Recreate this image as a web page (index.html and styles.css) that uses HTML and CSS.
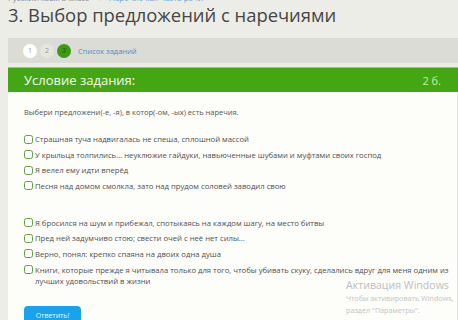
FILE: index.html
```html
<!DOCTYPE html>
<html lang="ru">

<head>
    <meta charset="UTF-8">
    <meta name="viewport" content="width=device-width, initial-scale=1.0">
    <link rel="stylesheet" href="styles.css">
</head>

<body>
    <div class="Page">
        <div class="Crumbs">
            <span>Русский язык 8 класс</span>
            <span class="Sep">→</span>
            <a href="#">Наречие как часть речи</a>
        </div>

        <h1 class="Title">3. Выбор предложений с наречиями</h1>

        <div class="Steps">
            <span class="Step Done">1</span>
            <span class="Step">2</span>
            <span class="Step Current">3</span>
            <a href="#" class="StepsLink">Список заданий</a>
        </div>

        <div class="Task">
            <div class="TaskHead">
                <span>Условие задания:</span>
                <span class="Points">2 б.</span>
            </div>
            <div class="TaskBody">
                <p class="Question">Выбери предложени(-е, -я), в котор(-ом, -ых) есть наречия.</p>

                <div class="Options">
                    <label class="Option"><span class="Box"></span><span>Страшная туча надвигалась не спеша, сплошной массой</span></label>
                    <label class="Option"><span class="Box"></span><span>У крыльца толпились... неуклюжие гайдуки, навьюченные шубами и муфтами своих господ</span></label>
                    <label class="Option"><span class="Box"></span><span>Я велел ему идти вперёд</span></label>
                    <label class="Option"><span class="Box"></span><span>Песня над домом смолкла, зато над прудом соловей заводил свою</span></label>
                </div>

                <div class="Options">
                    <label class="Option"><span class="Box"></span><span>Я бросился на шум и прибежал, спотыкаясь на каждом шагу, на место битвы</span></label>
                    <label class="Option"><span class="Box"></span><span>Пред ней задумчиво стою; свести очей с неё нет силы...</span></label>
                    <label class="Option"><span class="Box"></span><span>Верно, понял: крепко спаяна на двоих одна душа</span></label>
                    <label class="Option"><span class="Box"></span><span>Книги, которые прежде я читывала только для того, чтобы убивать скуку, сделались вдруг для меня одним из лучших удовольствий в жизни</span></label>
                </div>

                <button class="Answer">Ответить!</button>
            </div>
        </div>
    </div>

    <div class="Activation">
        <div class="ActivationTitle">Активация Windows</div>
        <div>Чтобы активировать Windows,</div>
        <div>раздел "Параметры".</div>
    </div>
</body>

</html>
```

FILE: styles.css
```css
body {
    margin: 0;
    font-family: 'Open Sans', sans-serif;
    background-color: #ededE7;
    color: #4d4d4d;
    overflow: hidden;
}

.Page {
    padding-left: 8px;
}

.Crumbs {
    height: 3px;
    overflow: hidden;
    display: flex;
    align-items: flex-end;
    gap: 6px;
    font-size: 8px;
    line-height: 10px;
    color: #888888;
}

.Crumbs a {
    color: #6aa6d6;
    text-decoration: none;
}

.Title {
    margin: 0;
    font-size: 18.4px;
    font-weight: normal;
    line-height: 24px;
    color: #454545;
}

.Steps {
    margin-top: 11px;
    height: 25px;
    background: #dcdcd6;
    display: flex;
    align-items: center;
    gap: 3px;
    padding-left: 15px;
}

.Step {
    width: 14px;
    height: 14px;
    border-radius: 50%;
    display: flex;
    justify-content: center;
    align-items: center;
    font-size: 7px;
    color: #9a9a9a;
    background: #e6e6e0;
}

.Step.Done {
    background: #ffffff;
}

.Step.Current {
    background: #3d9a12;
    color: #1f5a05;
}

.StepsLink {
    margin-left: 4px;
    font-size: 7.5px;
    color: #4a8fcc;
    text-decoration: none;
}

.Task {
    margin-top: 4px;
}

.TaskHead {
    height: 24px;
    border-top: 1px solid #86d45a;
    background: #45a614;
    color: #f4fbef;
    display: flex;
    justify-content: space-between;
    align-items: center;
    padding: 0 17px 0 16px;
    font-size: 13px;
}

.Points {
    font-size: 11px;
    color: #c6efa4;
}

.TaskBody {
    background: #fdfdfa;
    border-right: 1px solid #e2e2dc;
    padding: 14px 2px 20px 16px;
}

.Question {
    margin: 0 0 16px;
    font-size: 7.5px;
    line-height: 12px;
    color: #555555;
}

.Options {
    display: flex;
    flex-direction: column;
    gap: 4.6px;
    margin-bottom: 26px;
}

.Options:last-of-type {
    margin-bottom: 14px;
}

.Option {
    display: flex;
    align-items: flex-start;
    gap: 2px;
    font-size: 7.7px;
    line-height: 11px;
    color: #505050;
}

.Box {
    flex: none;
    width: 7px;
    height: 7px;
    margin-top: 0.5px;
    border: 1.3px solid #5f9f3f;
    border-radius: 2.5px;
    background: #ffffff;
}

.Answer {
    width: 57px;
    height: 22px;
    padding: 0 0 4px;
    border: none;
    border-radius: 4px;
    background: #19a3ea;
    color: #e8f6ff;
    font-family: 'Open Sans', sans-serif;
    font-size: 7px;
}

.Activation {
    position: absolute;
    left: 346px;
    top: 278px;
    white-space: nowrap;
    color: #c4c4c4;
    font-size: 7.2px;
    line-height: 12px;
}

.ActivationTitle {
    font-size: 10.6px;
    line-height: 14px;
    color: #bdbdbd;
}
```
